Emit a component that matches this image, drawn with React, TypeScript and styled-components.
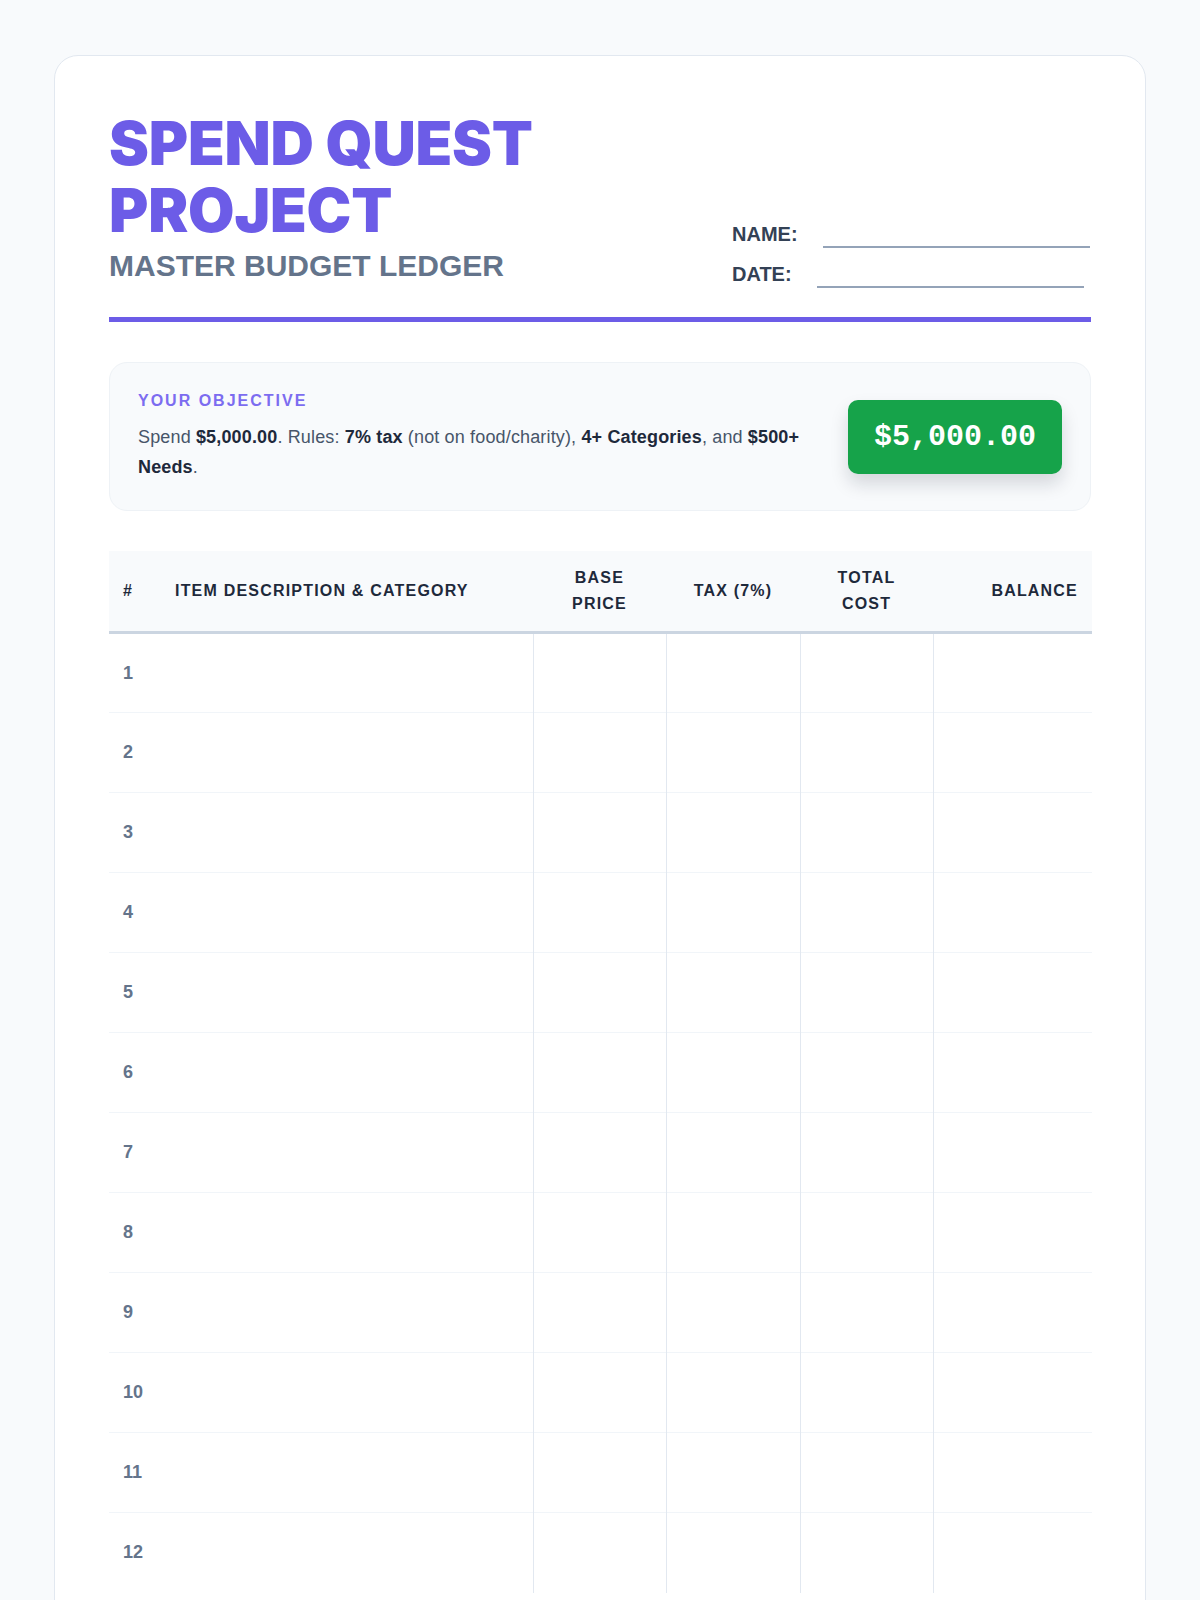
import styled, { createGlobalStyle } from 'styled-components';

const GlobalStyle = createGlobalStyle`
  body {
    margin: 0;
    background: #f8fafc;
    font-family: "Liberation Sans", Arial, sans-serif;
  }
`;

const ROWS = Array.from({ length: 12 }, (_, i) => i + 1);

export default function App() {
  return (
    <>
      <GlobalStyle />
      <Page>
        <Card>
          <Header>
            <TitleBlock>
              <Title>
                SPEND QUEST
                <br />
                PROJECT
              </Title>
              <Subtitle>MASTER BUDGET LEDGER</Subtitle>
            </TitleBlock>
            <Fields>
              <Field>
                <FieldLabel>NAME:</FieldLabel>
                <FieldLine />
              </Field>
              <Field>
                <FieldLabel>DATE:</FieldLabel>
                <FieldLine />
              </Field>
            </Fields>
          </Header>

          <Objective>
            <ObjectiveText>
              <ObjectiveHeading>YOUR OBJECTIVE</ObjectiveHeading>
              <ObjectiveBody>
                Spend <b>$5,000.00</b>. Rules: <b>7% tax</b> (not on food/charity),{' '}
                <b>4+ Categories</b>, and <b>$500+ Needs</b>.
              </ObjectiveBody>
            </ObjectiveText>
            <Budget>$5,000.00</Budget>
          </Objective>

          <Ledger>
            <colgroup>
              <col style={{ width: 52 }} />
              <col style={{ width: 372 }} />
              <col style={{ width: 133 }} />
              <col style={{ width: 134 }} />
              <col style={{ width: 133 }} />
              <col style={{ width: 159 }} />
            </colgroup>
            <thead>
              <tr>
                <Th>#</Th>
                <Th>ITEM DESCRIPTION &amp; CATEGORY</Th>
                <Th $align="center">
                  BASE
                  <br />
                  PRICE
                </Th>
                <Th $align="center">TAX (7%)</Th>
                <Th $align="center">
                  TOTAL
                  <br />
                  COST
                </Th>
                <Th $align="right">BALANCE</Th>
              </tr>
            </thead>
            <tbody>
              {ROWS.map((n) => (
                <Row key={n}>
                  <NumCell>{n}</NumCell>
                  <Td />
                  <Td $divided />
                  <Td $divided />
                  <Td $divided />
                  <Td $divided />
                </Row>
              ))}
            </tbody>
          </Ledger>
        </Card>
      </Page>
    </>
  );
}

const Page = styled.div`
  padding: 55px 54px 60px;
`;

const Card = styled.div`
  background: #fff;
  border: 1px solid #e2e8f0;
  border-radius: 24px;
  padding: 54px 54px 54px;
`;

const Header = styled.header`
  display: flex;
  justify-content: space-between;
  align-items: flex-end;
  padding-bottom: 33px;
  border-bottom: 5px solid #6c5ce7;
`;

const TitleBlock = styled.div`
  display: flex;
  flex-direction: column;
`;

const Title = styled.h1`
  margin: 0;
  font-family: Inter, "Noto Sans", sans-serif;
  font-weight: 900;
  font-size: 60px;
  line-height: 67px;
  letter-spacing: -0.2px;
  color: #6c5ce7;
`;

const Subtitle = styled.div`
  margin-top: 4px;
  font-size: 30px;
  line-height: 36px;
  font-weight: 700;
  color: #64748b;
`;

const Fields = styled.div`
  display: flex;
  flex-direction: column;
  gap: 18px;
  width: 359px;
  margin-bottom: -1px;
`;

const Field = styled.div`
  display: flex;
  align-items: flex-end;
  gap: 25px;
`;

const FieldLabel = styled.span`
  font-size: 20px;
  line-height: 22px;
  font-weight: 700;
  color: #334155;
`;

const FieldLine = styled.span`
  width: 267px;
  height: 0;
  border-bottom: 2px solid #94a3b8;
  margin-bottom: -3px;
`;

const Objective = styled.section`
  margin-top: 40px;
  display: flex;
  align-items: center;
  justify-content: space-between;
  gap: 40px;
  background: #f8fafc;
  border: 1px solid #eef2f6;
  border-radius: 18px;
  padding: 28px 28px;
`;

const ObjectiveText = styled.div`
  max-width: 700px;
`;

const ObjectiveHeading = styled.div`
  font-size: 16px;
  line-height: 19px;
  font-weight: 700;
  letter-spacing: 2px;
  color: #7c6cf0;
  margin-bottom: 12px;
`;

const ObjectiveBody = styled.p`
  margin: 0;
  font-size: 18px;
  line-height: 30px;
  letter-spacing: 0.15px;
  color: #475569;

  b {
    color: #1e293b;
    font-weight: 700;
  }
`;

const Budget = styled.div`
  flex-shrink: 0;
  background: #16a34a;
  color: #fff;
  font-family: "Liberation Mono", "Courier New", monospace;
  font-weight: 700;
  font-size: 30px;
  line-height: 36px;
  padding: 19px 26px;
  border-radius: 10px;
  box-shadow: 0 10px 18px rgba(15, 23, 42, 0.15);
`;

const Ledger = styled.table`
  margin-top: 40px;
  width: 100%;
  table-layout: fixed;
  border-collapse: collapse;
`;

const Th = styled.th<{ $align?: 'left' | 'center' | 'right' }>`
  background: #f8fafc;
  padding: 14px 14px;
  text-align: ${(p) => p.$align ?? 'left'};
  font-size: 16px;
  line-height: 26px;
  font-weight: 700;
  letter-spacing: 1.2px;
  color: #1e293b;
  border-bottom: 3px solid #cbd5e1;
`;

const Row = styled.tr`
  height: 80px;
  border-bottom: 1px solid #f1f5f9;

  &:last-child {
    border-bottom: none;
  }
`;

const Td = styled.td<{ $divided?: boolean }>`
  padding: 0 14px;
  border-left: ${(p) => (p.$divided ? '1px solid #e2e8f0' : 'none')};
`;

const NumCell = styled.td`
  padding: 0 14px;
  font-size: 18px;
  font-weight: 700;
  color: #64748b;
`;
